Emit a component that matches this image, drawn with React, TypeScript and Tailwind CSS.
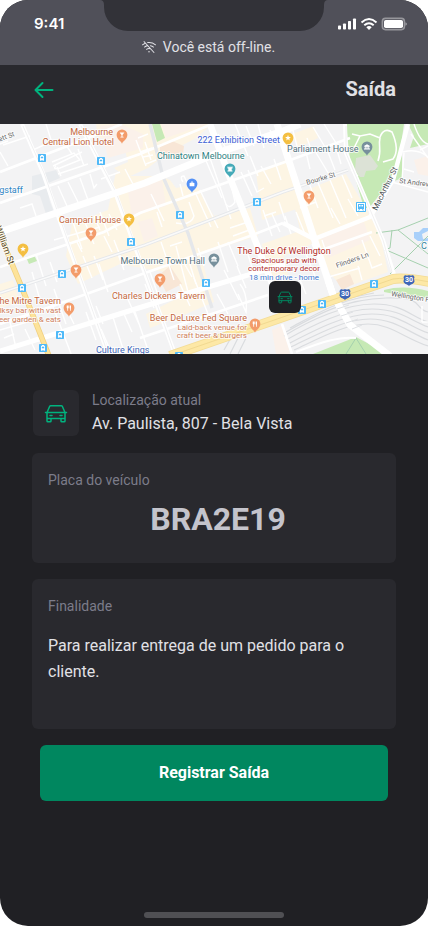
import { PiWifiSlash } from 'react-icons/pi';

type PinKind = 'drink' | 'food' | 'star' | 'bank' | 'castle' | 'bag';

const PIN_COLORS: Record<PinKind, string> = {
  drink: '#f39c6b',
  food: '#f39c6b',
  star: '#f4bf42',
  bank: '#77909c',
  castle: '#45aab8',
  bag: '#5491f5',
};

const PINS: [PinKind, number, number][] = [
  ['drink', 122, 11],
  ['star', 129, 95],
  ['drink', 91, 109],
  ['bag', 192, 60],
  ['castle', 230, 45],
  ['star', 288, 14],
  ['bank', 367, 23],
  ['drink', 309, 72],
  ['star', 23, 125],
  ['drink', 76, 146],
  ['food', 69, 184],
  ['bank', 214, 135],
  ['drink', 160, 155],
  ['food', 255, 200],
];

const STOPS: [number, number][] = [
  [42, 34], [101, 37], [180, 91], [257, 78], [131, 118], [62, 150],
  [22, 164], [60, 211], [43, 224], [206, 159], [374, 160], [322, 180], [302, 186], [179, 232],
];

const GLYPHS: Record<PinKind, string> = {
  drink: 'M-2.4-2.4H2.4L.5 0V1.8H1.6V2.6H-1.6V1.8H-.5V0Z',
  food: 'M-2.3-2.6H-.3V0L-.9.5V2.8H-1.7V.5L-2.3 0ZM.6-2.6H2V2.8H1.2V.4H.6Z',
  star: 'M0-3L.8-1H2.9L1.2.4L1.8 2.5L0 1.3L-1.8 2.5L-1.2.4L-2.9-1H-.8Z',
  bank: 'M-3-1L0-2.8L3-1V-.4H2.2V1.6H3V2.5H-3V1.6H-2.2V-.4H-3ZM-1.3-.3V1.5H-.5V-.3ZM.5-.3V1.5H1.3V-.3Z',
  castle: 'M-2.5-2.6H-1.5V-1.8H-.5V-2.6H.5V-1.8H1.5V-2.6H2.5V-.6H1.7V1.4H2.5V2.5H-2.5V1.4H-1.7V-.6H-2.5Z',
  bag: 'M-2.4-.9H-1.4C-1.4-3.2 1.4-3.2 1.4-.9H2.4V2.3H-2.4ZM-.7-.9H.7C.7-2.2-.7-2.2-.7-.9Z',
};

function Pin({ kind, x, y }: { kind: PinKind; x: number; y: number }) {
  return (
    <g transform={`translate(${x} ${y})`}>
      <path d="M0 8.8C-.8 6-5.4 4.4-5.4-.2A5.4 5.4 0 0 1 5.4-.2C5.4 4.4.8 6 0 8.8Z" fill={PIN_COLORS[kind]} />
      <path d={GLYPHS[kind]} fill="#fff" fillRule="evenodd" />
    </g>
  );
}

function Stop({ x, y }: { x: number; y: number }) {
  return (
    <g transform={`translate(${x} ${y})`}>
      <rect x="-4" y="-4" width="8" height="8" rx="0.8" fill="#4fb9f8" />
      <path d="M-1-3H1V-2.3H2V2H1.4L2 3H1L.6 2.3H-.6L-1 3H-2L-1.4 2H-2V-2.3H-1Z" fill="#fff" />
      <path d="M-1.2-1.3H1.2V.3H-1.2Z" fill="#4fb9f8" />
    </g>
  );
}

function Station({ x, y }: { x: number; y: number }) {
  return (
    <g transform={`translate(${x} ${y})`}>
      <rect x="-5" y="-5" width="10" height="10" rx="0.8" fill="#4fb9f8" />
      <rect x="-4" y="-4" width="8" height="8" fill="#fff" />
      <path d="M-3-3H3V2H2L3 3.4H1.8L1 2H-1L-1.8 3.4H-3L-2 2H-3Z" fill="#4fb9f8" />
      <path d="M-2-2H-.4V-.4H-2ZM.4-2H2V-.4H.4Z" fill="#fff" />
    </g>
  );
}

function Shield({ x, y }: { x: number; y: number }) {
  return (
    <g transform={`translate(${x} ${y})`}>
      <path d="M-4-5Q-2-4 0-5Q2-4 4-5L5.5-3Q4.5-1 5.5 1C5.5 4 2 4 0 6C-2 4-5.5 4-5.5 1Q-4.5-1-5.5-3Z" fill="#3f66b8" />
      <text y="2" textAnchor="middle" fill="#fff" className="text-[7px] font-bold">30</text>
    </g>
  );
}

function StreetMap() {
  return (
    <svg
      viewBox="0 0 428 230"
      preserveAspectRatio="xMidYMid slice"
      className="block h-full w-full"
      role="img"
      aria-label="Mapa"
      fill="none"
    >
      <rect width="428" height="230" fill="#f3f3f4" />

      {/* commercial blocks */}
      <g fill="#fdf5e4">
        <path d="M96 0H212L196 14L166 30L148 44L126 54L114 44L128 38L122 14H98Z" />
        <path d="M116 48L126 52L160 52L170 56L176 64L196 60L204 76L214 92L250 84L258 112L200 130L214 178L186 190L150 204L146 190L182 172L176 150L120 140L78 160L66 132L72 100L108 86L112 66Z" />
        <path d="M256 48L286 36L300 84L262 96Z" />
        <path d="M292 72L346 50L380 110L388 148L344 164L330 150L318 122L300 106Z" />
        <path d="M262 120L308 104L312 120L284 132L290 160L272 164Z" />
        <path d="M0 160L13 156L20 178L0 184Z" />
        <path d="M292 10L314 2L318 14L298 24Z" />
      </g>
      <g fill="#fbf1ea">
        <path d="M100 2L120 0L143 10V24L108 34Z" />
        <path d="M128 68L162 56L166 82L132 92ZM162 0H206L166 14Z" />
        <path d="M138 98L152 94L158 112L144 118ZM320 112L364 98L370 116L328 134Z" />
        <path d="M272 206L284 200L290 230H276ZM414 36L428 32V52L418 50Z" />
      </g>
      <g fill="#f8e6d6">
        <path d="M160 20L172 17L184 22L183 30L170 36L160 32ZM158 152L170 142L182 160L166 168Z" />
        <path d="M336 156L350 150L354 160L342 166Z" />
      </g>
      <path d="M32 52L56 46L60 54L46 60L50 78L54 88L46 90L40 72L32 70Z" fill="#e8ebee" />

      {/* parks */}
      <g fill="#c6e9b5">
        <path d="M346 0H404L400 28L393 54L369 84L364 84L350 36Z" />
        <path d="M408 0H428V20L410 24L414 12ZM392 58L402 30L402 54Z" />
        <path d="M152 0H160L165 14L157 18Z" />
        <path d="M26 133L34 131L37 137L29 140Z" />
        <path d="M384 166C398 162 414 163 428 167V174C412 172 398 171 384 168Z" />
        <path d="M313 230L356 213L388 230Z" />
      </g>
      <path d="M356 34L370 31L378 42L375 46L366 47L364 53H360L355 46Z" fill="#dce2d6" />
      <path
        d="M352 10L360 12L370 10L380 14C378 22 382 26 378 37M380 13Q384 3 392 8Q400 26 393 35L383 38M352 28L356 20L360 12M351 46L358 52"
        stroke="#fff" strokeWidth="1.6"
      />
      <path d="M414 114V108H419L423 104H428V107L422 110L423 115L428 114V117H418Z" fill="#a9d0fa" />
      <g stroke="#a5d0ae" strokeWidth="1">
        <path d="M376 109L398 106L428 94M392 106L390 124L384 126M384 125L428 144M390 150L428 112M398 106L428 130" />
        <path d="M346 230L356 214L366 230" />
      </g>

      {/* rail yard */}
      <g stroke="#dadcdf" strokeWidth="1.2">
        <path d="M284 212C310 196 345 180 374 180S410 192 428 198" />
        <path d="M286 216C315 200 345 185 372 185S410 196 428 203" />
        <path d="M288 220C315 206 345 190 372 190S408 202 428 209" />
        <path d="M291 223C318 210 345 195 370 195S408 208 428 216" />
        <path d="M294 226C320 214 345 200 368 200S404 214 428 222" />
        <path d="M286 208C318 190 345 175 386 174S412 184 428 188" />
        <path d="M310 182L374 169M290 204C320 188 345 172 384 171" />
        <path d="M224 226L232 212M230 230L240 210M238 230L246 214" />
      </g>
      <path d="M296 228C322 218 340 212 356 214" stroke="#fff" strokeWidth="2" />

      {/* minor streets */}
      <g stroke="#fff" strokeWidth="1.4">
        <path d="M0 28L8 42M3 21L30 12M52 38L74 29L80 36L60 44Q52 46 56 42M53 42L82 28M58 50L88 40M57 43L61 52M78 25L84 42M66 21L72 30M46 0L53 22" />
        <path d="M48 66L57 88L68 84M58 62L67 82M68 58L79 80M80 54L88 76M90 50L94 64L97 60M20 84L32 80L36 92M0 20L8 17" />
        <path d="M73 98L82 125M84 96L94 120M94 92L100 106M100 88L109 112M109 90L117 106M54 116L100 103M33 26L46 20" />
        <path d="M101 55L120 48M125 45L135 64M136 16L146 42M138 14L148 10" />
        <path d="M145 18L151 36M140 28L152 24M143 33L153 31M146 40L156 36M151 70L164 97M157 88L162 103M180 60L183 72M183 58Q179 52 184 52L190 65M189 78L194 92Q191 102 176 99" />
        <path d="M208 28L231 95M204 32L222 74M195 68L211 103M200 66L218 104M218 10L230 32M235 0L248 32M246 2L254 22M258 0L264 24M270 6L276 22" />
        <path d="M241 48L252 72M248 46L257 68L264 64M261 42L271 60M250 32L258 52M231 60L235 78Q229 86 226 80M274 35L281 56" />
        <path d="M230 104L248 98M233 112L252 105M263 86L272 112M272 90L280 108M279 78L285 96M264 92L276 88" />
        <path d="M307 14L312 28M313 3L325 23M324 0L336 19M292 3L297 22M306 28L310 45M315 27L330 52M326 23L335 46M337 26L341 40" />
        <path d="M308 56L318 84M318 59L333 94M330 56L346 94M342 51L352 74M348 75L358 92M300 84L316 78M296 88L305 110M307 94L314 108M331 84L340 100M285 92L291 110" />
        <path d="M50 138L57 158M83 132L92 154M94 132L103 156M104 112L112 128M114 116L124 142M118 130L124 146M99 140L108 168M82 128L77 118M32 148L40 176M36 130L46 162M54 165L66 200" />
        <path d="M0 206L34 196M4 214L14 210M10 198L16 224M25 205L35 226M52 180L73 235M68 188L74 200M86 188L96 216M96 182L103 200M101 205L112 230M112 190L124 228M124 190L132 208M135 188L148 226M126 171L139 200" />
        <path d="M145 160L154 184M150 148L158 171M176 122L188 168M188 134L196 160M198 124L204 142M218 118L228 148M228 118L238 142M161 118L174 156M170 122L182 118M184 139L192 153" />
        <path d="M180 160L190 182M194 154L208 190M224 146L239 176M237 142L246 164M217 170L228 190M238 170L246 188Q248 170 240 160M246 124L254 150M262 130L270 146" />
        <path d="M306 130L315 152M312 120L324 145M322 116L326 128M325 154L360 144M358 142L362 156M362 116L372 144L382 140M370 112L380 132M281 152L286 166M300 156L306 170" />
        <path d="M403 28Q418 24 428 33M404 29L402 56M388 57L428 68M404 45L414 48M411 10L428 34M420 26L428 22M422 182V198M422 198H428M414 0Q420 18 428 20" />
      </g>

      {/* main streets */}
      <g stroke="#fff" strokeWidth="2.6">
        <path d="M0 48L78 18L122 0M0 79L140 30L212 0M0 143L104 108L140 89L285 38L350 14" />
        <path d="M0 200L50 183L145 149L250 112L283 99" />
        <path d="M140 214L268 171M316 128L372 108M282 200L292 230" />
      </g>
      <g stroke="#fff" strokeWidth="4">
        <path d="M22 0L43 49L63 106L108 230" />
        <path d="M80 0L115 68L131 112L175 230" />
        <path d="M345 0L346 29L383 116L394 150" />
        <path d="M408 0L401 26L393 56L370 93L314 115L283 99" strokeWidth="4.5" />
      </g>
      <path d="M346 2V29L383 116L392 148M23 2L44 49L64 106L108 230M81 2L116 68L132 112L175 230" stroke="#ececee" strokeWidth="0.8" />
      <path
        d="M150 0L163 53L188 109L212 184M0 169L145 121L283 68L348 46"
        stroke="#e5e7ea" strokeWidth="3.4"
      />
      <path d="M0 169L145 121L283 68L348 46" stroke="#fafafa" strokeWidth="1.6" />
      <g stroke="#fff">
        <path d="M0 108L145 59L220 28L286 6L300 0" strokeWidth="7" />
        <path d="M0 227L145 182L285 140" strokeWidth="5" />
        <path d="M210 0L230 54L255 116L280 180" strokeWidth="6.5" />
        <path d="M277 0L286 28L313 111L333 171L350 201L390 232" strokeWidth="7" />
      </g>
      <path d="M334 178L344 174M337 185L349 181M341 192L353 188M346 199L358 195M352 205L362 201" stroke="#dfe1e4" strokeWidth="1" />

      {/* arterial roads */}
      <path d="M170 232L283 193L393 155Q404 153 430 158" stroke="#f3dc96" strokeWidth="10" />
      <path d="M170 232L283 193L393 155Q404 153 430 158" stroke="#fde8a6" strokeWidth="8.4" />
      <path d="M170 232L283 193L393 155Q404 153 430 158" stroke="#edd48c" strokeWidth="0.8" />
      <path d="M-6 92L7 128L22 164L49 232" stroke="#f0d080" strokeWidth="5.6" />
      <path d="M-6 92L7 128L22 164L49 232" stroke="#fde39a" strokeWidth="4" />
      <path d="M328 156L333 171" stroke="#fff" strokeWidth="7" />

      {STOPS.map(([x, y]) => <Stop key={`${x}-${y}`} x={x} y={y} />)}
      <Station x={361} y={83} />
      {PINS.map(([kind, x, y]) => <Pin key={`${x}-${y}`} kind={kind} x={x} y={y} />)}
      <Shield x={345} y={170} />
      <Shield x={409} y={156} />

      {/* labels, outlined in white to stay legible over the streets */}
      <g stroke="#fff" strokeWidth="2" strokeLinejoin="round" strokeOpacity="0.75" className="text-[9px] [paint-order:stroke]">
        <g fill="#c4683f">
          <text x="113" y="11" textAnchor="end">Melbourne</text>
          <text x="114" y="21" textAnchor="end">Central Lion Hotel</text>
          <text x="59" y="99">Campari House</text>
          <text x="112" y="175">Charles Dickens Tavern</text>
          <text x="61" y="180" textAnchor="end">he Mitre Tavern</text>
          <text x="247" y="197" textAnchor="end">Beer DeLuxe Fed Square</text>
          <g className="text-[8px]" fill="#cf7f5c">
            <text x="61" y="189" textAnchor="end">olksy bar with vast</text>
            <text x="61" y="198" textAnchor="end">beer garden &amp; eats</text>
            <text x="247" y="206" textAnchor="end">Laid-back venue for</text>
            <text x="247" y="214" textAnchor="end">craft beer &amp; burgers</text>
          </g>
        </g>
        <text x="23" y="69" textAnchor="end" fill="#2f86c4">gstaff</text>
        <text x="280" y="19" textAnchor="end" fill="#3c5fd6">222 Exhibition Street</text>
        <text x="157" y="35" fill="#2f8283">Chinatown Melbourne</text>
        <text x="287" y="28" fill="#557280">Parliament House</text>
        <text x="205" y="140" textAnchor="end" fill="#557280">Melbourne Town Hall</text>
        <text x="96" y="229" fill="#3f66b8">Culture Kings</text>
        <text x="421" y="125" fill="#2f829c">C</text>
        <g textAnchor="middle" fill="#b3302c">
          <text x="284" y="130">The Duke Of Wellington</text>
          <g className="text-[8px]">
            <text x="284" y="139">Spacious pub with</text>
            <text x="284" y="147">contemporary decor</text>
            <text x="284" y="156" fill="#3f78d0">18 min drive - home</text>
          </g>
        </g>
        <g fill="#666" className="text-[7px]">
          <text transform="translate(307 61) rotate(-17)">Bourke St</text>
          <text transform="translate(337 144) rotate(-20)">Flinders Ln</text>
          <text transform="translate(399 59) rotate(7)">St Andrews</text>
          <text transform="translate(391 172) rotate(9)">Wellington Pa</text>
          <text transform="translate(15 12) rotate(-20)" textAnchor="end">ett St</text>
          <text transform="translate(377 87) rotate(-64)" fill="#4f5357" className="text-[8px]">MacArthur St</text>
          <text transform="translate(9 141) rotate(70)" textAnchor="end" fill="#5a4a26" className="text-[9px]">William St</text>
        </g>
      </g>
    </svg>
  );
}

function CarIcon({ className }: { className: string }) {
  return (
    <svg
      viewBox="0 0 24 24"
      fill="none"
      stroke="currentColor"
      strokeLinecap="round"
      strokeLinejoin="round"
      className={className}
      aria-hidden="true"
    >
      <path d="M1.5 11.5H22.5M3 11.5V20Q3 20.8 3.8 20.8H6.2Q7 20.8 7 20V17.5M17 17.5V20Q17 20.8 17.8 20.8H20.2Q21 20.8 21 20V11.5M3 17.5H21M3 11.5L5.7 5.3Q6 4.7 6.6 4.7H17.4Q18 4.7 18.3 5.3L21 11.5M6 14.5H8M16 14.5H18" strokeWidth="1.5" />
    </svg>
  );
}

function StatusIcons() {
  return (
    <svg width="69" height="14" viewBox="0 0 69 14" fill="#fff" aria-hidden="true">
      <rect x="0" y="8.5" width="3" height="4" rx="0.8" />
      <rect x="5" y="6.5" width="3" height="6" rx="0.8" />
      <rect x="10" y="4" width="3" height="8.5" rx="0.8" />
      <rect x="15" y="1.5" width="3" height="11" rx="0.8" />
      <g fill="none" stroke="#fff" strokeWidth="2">
        <path d="M23.5 5.4Q31 -1.4 38.5 5.4" />
        <path d="M26.3 8.3Q31 4.2 35.7 8.3" />
      </g>
      <path d="M28.3 10.2Q31 8 33.7 10.2L31 12.9Z" />
      <rect x="44.4" y="1.4" width="22" height="11.2" rx="3" fill="none" stroke="#fff" strokeWidth="1.6" strokeOpacity="0.4" />
      <rect x="46" y="3" width="19" height="8" rx="1.8" />
      <path d="M67.5 5.2Q68.8 5.8 68.8 7T67.5 8.8Z" fillOpacity="0.5" />
    </svg>
  );
}

export default function App() {
  return (
    <div className="bg-white font-['Roboto',sans-serif]">
      <div className="relative flex min-h-screen flex-col overflow-hidden rounded-[28px] bg-[#202024]">
        <div className="bg-[#505059] pt-3 pb-[7px]">
          <svg
            viewBox="0 0 228 31"
            className="absolute top-0 left-1/2 h-[31px] w-[228px] -translate-x-1/2"
            fill="#323238"
            aria-hidden="true"
          >
            <path d="M0 0H228Q224 0 224 5V7A24 24 0 0 1 200 31H28A24 24 0 0 1 4 7V5Q4 0 0 0Z" />
          </svg>
          <div className="flex h-6 items-center justify-between pr-[21px] pl-[34px]">
            <time className="font-['Inter',sans-serif] text-[15px] font-semibold text-white">9:41</time>
            <StatusIcons />
          </div>
          <p className="flex h-[22px] items-center justify-center gap-1.5 pr-3 text-sm text-[#e1e1e6]" role="status">
            <PiWifiSlash className="size-4" aria-hidden="true" />
            Você está off-line.
          </p>
        </div>

        <header className="flex items-center justify-between bg-[#29292e] px-8 pt-2.5 pb-[21px]">
          <button type="button" aria-label="Voltar" className="text-[#00b37e]">
            <svg
              viewBox="0 0 24 24"
              className="size-6"
              fill="none"
              stroke="currentColor"
              strokeWidth="2"
              strokeLinecap="round"
              strokeLinejoin="round"
              aria-hidden="true"
            >
              <path d="M20.5 13H3.5M10.5 6L3.5 13L10.5 20" />
            </svg>
          </button>
          <h1 className="text-xl font-bold text-[#e1e1e6]">Saída</h1>
        </header>

        <div className="relative h-[230px] overflow-hidden">
          <StreetMap />
          <div className="absolute top-[157px] left-[269px] flex size-8 items-center justify-center rounded-md bg-[#202024] text-[#00875f]">
            <CarIcon className="size-4" />
          </div>
        </div>

        <main className="flex flex-col gap-4 px-8 pt-[35px]">
          <div className="flex items-center gap-3">
            <div className="m-px flex size-[46px] items-center justify-center rounded-md bg-[#29292e] text-[#00b37e]">
              <CarIcon className="size-6" />
            </div>
            <div>
              <p className="text-sm leading-[22px] text-[#7c7c8a]">Localização atual</p>
              <p className="text-base leading-[26px] text-[#e1e1e6]">Av. Paulista, 807 - Bela Vista</p>
            </div>
          </div>

          <div className="rounded-md bg-[#29292e] px-4 pt-4 pb-6">
            <label htmlFor="plate" className="block text-sm leading-[22px] text-[#7c7c8a]">
              Placa do veículo
            </label>
            <input
              id="plate"
              type="text"
              defaultValue="BRA2E19"
              className="mt-2 block h-10 w-full bg-transparent pl-2 text-center text-[32px] font-bold text-[#c4c4cc] outline-none"
            />
          </div>

          <div className="rounded-md bg-[#29292e] p-4">
            <label htmlFor="purpose" className="block text-sm leading-[22px] text-[#7c7c8a]">
              Finalidade
            </label>
            <textarea
              id="purpose"
              defaultValue="Para realizar entrega de um pedido para o cliente."
              className="mt-4 block h-20 w-full resize-none overflow-hidden bg-transparent text-base leading-[26px] text-[#e1e1e6] outline-none"
            />
          </div>

          <button type="button" className="mx-2 h-14 rounded-md bg-[#00875f] text-base font-bold text-white">
            Registrar Saída
          </button>
        </main>

        <div className="mx-auto mt-auto mb-2 h-1.5 w-[140px] rounded-full bg-[#505054]" />
      </div>
    </div>
  );
}
